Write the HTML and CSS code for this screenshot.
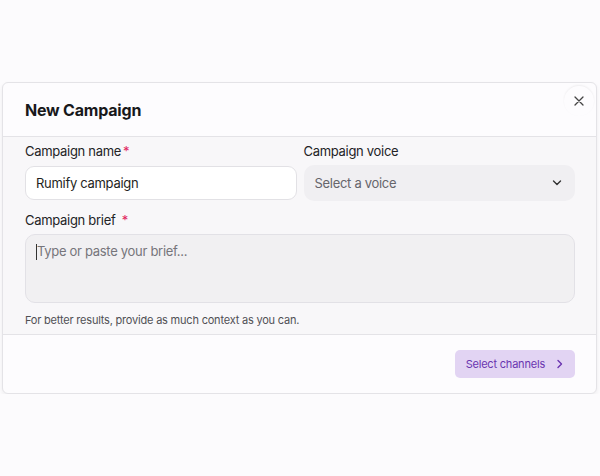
FILE: index.html
```html
<!DOCTYPE html>
<html lang="en">
<head>
  <meta charset="UTF-8">
  <meta name="viewport" content="width=device-width, initial-scale=1.0">
  <title>New Campaign</title>

  <link rel="stylesheet" href="styles.css">
</head>
<body>
  <div class="modal">
    <div class="modal_head">
      <h2 class="modal_title">New Campaign</h2>
      <button class="close_btn" aria-label="Close">
        <svg width="10" height="10" viewBox="0 0 10 10"><path d="M1 1L9 9M9 1L1 9" stroke="#444" stroke-width="1.3" stroke-linecap="round"/></svg>
      </button>
    </div>

    <div class="modal_body">
      <div class="row">
        <div class="field">
          <label class="label">Campaign name<span class="req">*</span></label>
          <input class="text_input" value="Rumify campaign">
        </div>
        <div class="field">
          <label class="label">Campaign voice</label>
          <div class="select">
            <span>Select a voice</span>
            <svg width="10" height="6" viewBox="0 0 10 6"><path d="M1.5 1L5 4.5L8.5 1" fill="none" stroke="#333" stroke-width="1.4" stroke-linecap="round" stroke-linejoin="round"/></svg>
          </div>
        </div>
      </div>

      <div class="field brief">
        <label class="label">Campaign brief <span class="req spaced">*</span></label>
        <div class="textarea"><span class="caret"></span><span class="placeholder">Type or paste your brief...</span></div>
      </div>

      <p class="hint">For better results, provide as much context as you can.</p>
    </div>

    <div class="modal_foot">
      <button class="next_btn">Select channels
        <svg width="6" height="10" viewBox="0 0 6 10"><path d="M1 1.5L4.5 5L1 8.5" fill="none" stroke="#6a34b0" stroke-width="1.4" stroke-linecap="round" stroke-linejoin="round"/></svg>
      </button>
    </div>
  </div>
</body>
</html>
```

FILE: styles.css
```css
body{
  margin: 0;
  background-color: #fcfbfd;
  font-family: Inter, "Noto Sans", sans-serif;
  color: #1f1f22;
}

.modal{
  margin: 82px 3px 0 2px;
  border: 1px solid #e4e3e7;
  border-radius: 6px;
  background-color: #fdfcfe;
  box-shadow: 0 2px 4px rgba(0, 0, 0, 0.06);
  overflow: hidden;
}

.modal_head{
  position: relative;
  height: 53px;
  display: flex;
  align-items: center;
  padding: 0 22px;
  border-bottom: 1px solid #e4e3e7;
}

.modal_title{
  margin: 0;
  font-size: 16px;
  font-weight: 700;
  letter-spacing: -0.2px;
  color: #18181b;
}

.close_btn{
  position: absolute;
  top: 3px;
  right: 2px;
  width: 30px;
  height: 30px;
  border-radius: 50%;
  border: none;
  background-color: #fdfcfe;
  box-shadow: 0 -1px 2px rgba(0, 0, 0, 0.06);
  display: flex;
  align-items: center;
  justify-content: center;
  padding: 0;
  cursor: pointer;
}

.modal_body{
  background-color: #f8f7f9;
  padding: 4px 21px 6px 22px;
}

.row{
  display: grid;
  grid-template-columns: 1fr 1fr;
  gap: 7px;
}

.field{
  display: flex;
  flex-direction: column;
}

.label{
  font-size: 13px;
  letter-spacing: -0.3px;
  line-height: 20px;
  color: #232326;
  margin-bottom: 4px;
}

.req{
  color: #e0245e;
  margin-left: 2px;
}

.req.spaced{
  margin-left: 3px;
}

.text_input{
  box-sizing: border-box;
  height: 34px;
  margin-top: 1px;
  border: 1px solid #e2e1e5;
  border-radius: 9px;
  background-color: #ffffff;
  padding: 0 10px;
  font-family: inherit;
  font-size: 13px;
  letter-spacing: -0.3px;
  color: #1f1f22;
  outline: none;
}

.select{
  box-sizing: border-box;
  height: 36px;
  border-radius: 10px;
  background-color: #f0eff2;
  display: flex;
  align-items: center;
  justify-content: space-between;
  padding: 0 13px 0 11px;
  font-size: 13px;
  letter-spacing: -0.3px;
  color: #66656b;
}

.brief{
  margin-top: 9px;
}

.textarea{
  box-sizing: border-box;
  height: 69px;
  border: 1px solid #e2e1e6;
  border-radius: 10px;
  background-color: #f1f0f2;
  padding: 8px 10px;
  font-size: 13px;
  letter-spacing: -0.3px;
  color: #76757b;
  display: flex;
  align-items: flex-start;
}

.caret{
  width: 1px;
  height: 16px;
  background-color: #333;
  margin-top: 1px;
}

.hint{
  margin: 9px 0 0;
  font-size: 11px;
  letter-spacing: -0.2px;
  line-height: 16px;
  color: #505055;
}

.modal_foot{
  border-top: 1px solid #e4e3e7;
  padding: 15px 21px 15px 22px;
  display: flex;
  justify-content: flex-end;
}

.next_btn{
  height: 28px;
  padding: 0 12px 0 11px;
  border: none;
  border-radius: 5px;
  background-color: #e2d4f3;
  color: #6a34b0;
  font-family: inherit;
  font-size: 11px;
  letter-spacing: -0.2px;
  display: flex;
  align-items: center;
  gap: 12px;
  cursor: pointer;
}
```
